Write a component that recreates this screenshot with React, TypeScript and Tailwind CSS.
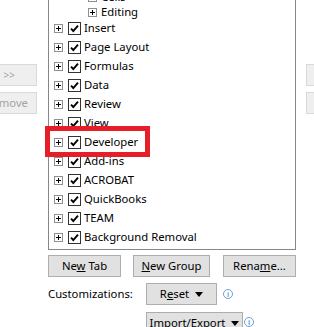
import type { ReactNode } from "react";

const font = { fontFamily: '"Noto Sans", sans-serif' };

function PlusBox() {
    return (
        <span className="w-[9px] h-[9px] border border-[#8f8f8f] bg-white flex items-center justify-center shrink-0">
            <svg width="7" height="7" viewBox="0 0 7 7">
                <path d="M1 3.5H6M3.5 1V6" stroke="#000" strokeWidth="1" />
            </svg>
        </span>
    )
}

function Check() {
    return (
        <span className="w-[13px] h-[13px] border border-[#333] bg-white flex items-center justify-center shrink-0">
            <svg width="11" height="11" viewBox="0 0 11 11">
                <path d="M2 5.6L4.3 8L9 2.6" stroke="#000" strokeWidth="1.9" fill="none" />
            </svg>
        </span>
    )
}

function SubRow({ label, h }: { label: string; h: string }) {
    return (
        <div className={h + " flex items-center pl-[39px] gap-[4px]"}>
            <PlusBox />
            <span>{label}</span>
        </div>
    )
}

function TabRow({ label }: { label: string }) {
    return (
        <div className="h-[19px] flex items-center pl-[5px]">
            <PlusBox />
            <span className="ml-[5px]"><Check /></span>
            <span className="ml-[3px] whitespace-nowrap">{label}</span>
        </div>
    )
}

function Btn({ children, className = "" }: { children: ReactNode; className?: string }) {
    return (
        <div className={"h-[22px] border border-[#adadad] bg-[#e1e1e1] flex items-center justify-center whitespace-nowrap " + className}>
            {children}
        </div>
    )
}

function Info() {
    return (
        <span className="w-[10px] h-[10px] rounded-full border border-[#6f9fd6] flex items-center justify-center text-[7px] font-bold leading-none text-[#6f9fd6]">i</span>
    )
}

function Arrow() {
    return (
        <svg width="8" height="5" viewBox="0 0 8 5" className="ml-[6px]">
            <path d="M0 0H8L4 5Z" fill="#000" />
        </svg>
    )
}

export default function App() {
    const tabs = ["Insert", "Page Layout", "Formulas", "Data", "Review", "View", "Developer", "Add-ins", "ACROBAT", "QuickBooks", "TEAM", "Background Removal"]

    return (
        <div className="w-[314px] h-[327px] overflow-hidden relative bg-white text-[11.3px] text-black" style={font}>
            <div className="flex items-start">
                <div className="w-[37px] shrink-0 pt-[64px] flex flex-col gap-[6px] text-[#a3a3a3]">
                    <div className="h-[22px] border border-[#d9d9d9] border-l-0 bg-[#efefef] flex items-center justify-end pr-[21px] text-[10px]">&gt;&gt;</div>
                    <div className="h-[22px] border border-[#d9d9d9] border-l-0 bg-[#efefef] flex items-center justify-end pr-[8px] overflow-hidden whitespace-nowrap">Remove</div>
                </div>
                <div className="ml-[11px] w-[248px] h-[266px] -mt-[16px] border border-[#828790] overflow-hidden pt-[4px] shrink-0">
                    <SubRow label="Cells" h="h-[16px]" />
                    <SubRow label="Editing" h="h-[14px]" />
                    {tabs.map(t => <TabRow key={t} label={t} />)}
                </div>
                <div className="ml-[10px] flex-1 pt-[64px] flex flex-col gap-[6px]">
                    <div className="h-[22px] w-[20px] border border-[#d9d9d9] border-r-0 bg-[#efefef]"></div>
                    <div className="h-[22px] w-[20px] border border-[#d9d9d9] border-r-0 bg-[#efefef]"></div>
                </div>
            </div>

            <div className="pl-[48px] pt-[5px] flex gap-[12px]">
                <Btn className="w-[73px]"><span>Ne<u>w</u> Tab</span></Btn>
                <Btn className="w-[77px]"><span><u>N</u>ew Group</span></Btn>
                <Btn className="w-[73px] ml-[1px]"><span>Rena<u>m</u>e...</span></Btn>
            </div>

            <div className="pl-[48px] pt-[6px] flex items-center">
                <span className="w-[98px]">Customizations:</span>
                <Btn className="w-[71px]"><span>R<u>e</u>set</span><Arrow /></Btn>
                <span className="ml-[6px]"><Info /></span>
            </div>

            <div className="pl-[146px] pt-[7px] flex items-center">
                <Btn className="w-[97px]"><span>Import/Export</span><Arrow /></Btn>
                <span className="ml-[1px] -mt-[2px]"><Info /></span>
            </div>

            <div className="absolute left-[45px] top-[126px] w-[105px] h-[31px] border-[5px] border-[#e61e27]"></div>
        </div>
    )
}
